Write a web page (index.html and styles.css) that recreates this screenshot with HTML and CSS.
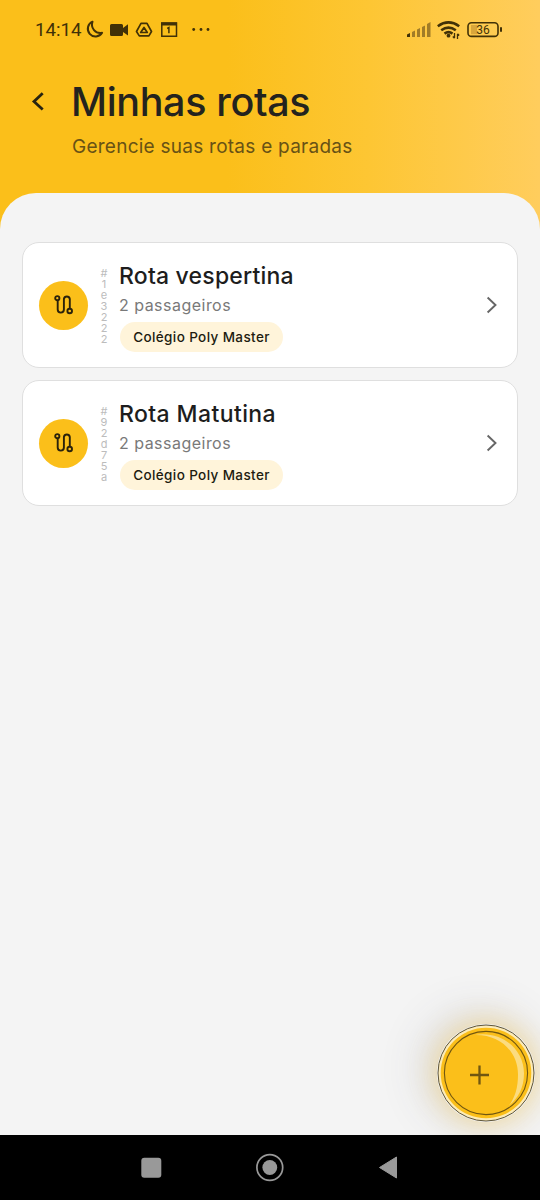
FILE: index.html
```html
<!DOCTYPE html>
<html lang="pt-BR">
<head>
<meta charset="utf-8">
<title>Minhas rotas</title>
<link rel="stylesheet" href="styles.css">
</head>
<body>
<div class="screen">
  <header class="header">
    <div class="status">
      <span class="clock">14:14</span>
      <svg class="status-left" width="130" height="24" viewBox="84 18 130 24" fill="none" stroke="#413107">
        <path d="M92.500 21.700a7.700 7.700 0 1 0 9.600 11.100 8.400 8.400 0 0 1-9.600-11.100z" stroke-width="2" stroke-linejoin="round"/>
        <path d="M111.500 24h10q1.500 0 1.500 1.500v2.400l5-3.700v11.400l-5-3.700v2.600q0 1.500-1.500 1.500h-10q-1.500 0-1.500-1.500v-9q0-1.500 1.500-1.500z" fill="#413107" stroke="none"/>
        <path d="M141 23.300h6l4.500 8.200-2.600 4.400h-9.600l-2.800-4.400zM144 27.500l3.300 5h-6.600z" stroke-width="1.700" stroke-linejoin="round"/>
        <path d="M161.800 23h14.700v13.200h-14.700z" stroke-width="1.500"/>
        <path d="M161 24h16" stroke-width="3"/>
        <path d="M167.200 28.500l1.700-.9v5.700" stroke-width="1.500"/>
        <g fill="#413107" stroke="none"><circle cx="193.700" cy="29.500" r="1.400"/><circle cx="201" cy="29.500" r="1.400"/><circle cx="208" cy="29.500" r="1.400"/></g>
      </svg>
      <svg class="status-right" width="100" height="24" viewBox="404 18 100 24" fill="none" stroke="#413107">
        <g stroke="none" fill="#a17c27"><path d="M412 32l3-1.500V37h-3zM417 29.500l3-1.500v9h-3zM422 27l3-1.500V37h-3zM427 24l3.500-2v15H427z"/><path d="M407 34.500l3-1.500v4h-3z" fill="#413107"/></g>
        <path d="M437.800 26.200q10.700-7.500 21.400 0M441.200 30.200q7.300-5.200 14.600 0M444.500 33.600q4-3 8 0" stroke-width="2.600"/>
        <circle cx="448.500" cy="35.700" r="1.900" fill="#413107" stroke="none"/>
        <path d="M454.500 33v5M457.500 34v5M452.800 36.500l1.700 1.800M459.200 35.500l-1.700-1.800" stroke-width="1.300"/>
        <rect x="468" y="22.800" width="30" height="13.600" rx="3.500" stroke-width="1.600"/>
        <path d="M471 25h6v9.200h-6z" fill="#d9a63b" stroke="none"/>
        <path d="M501 27.200v4.600" stroke-width="2"/>
        <text class="battery" x="483" y="34" text-anchor="middle">36</text>
      </svg>
    </div>
    <div class="heading">
      <svg class="back" width="14" height="20" viewBox="0 0 14 20"><path d="M12.700 2.300 4 10.500l8.700 8" fill="none" stroke="#282410" stroke-width="2.800"/></svg>
      <div>
        <h1 class="title">Minhas rotas</h1>
        <p class="subtitle">Gerencie suas rotas e paradas</p>
      </div>
    </div>
  </header>
  <main class="sheet">
    <article class="card">
      <div class="route-icon">
        <svg width="20" height="20" viewBox="0 0 20 20" fill="none" stroke="#2b220b" stroke-width="1.900"><circle cx="3.300" cy="3.200" r="2.100"/><circle cx="15.700" cy="16" r="2.300"/><path d="M3.700 5.300v9.200a3.100 3.100 0 0 0 6.200 0V4a3 3 0 0 1 5.900 0v9.700"/></svg>
      </div>
      <div class="code"><span>#</span><span>1</span><span>e</span><span>3</span><span>2</span><span>2</span><span>2</span></div>
      <div class="info">
        <h2 class="name">Rota vespertina</h2>
        <p class="count">2 passageiros</p>
        <span class="chip">Colégio Poly Master</span>
      </div>
      <svg class="chevron" width="12" height="18" viewBox="0 0 12 18"><path d="M1.600 1.500 9.500 9l-7.900 7.500" fill="none" stroke="#666" stroke-width="1.900"/></svg>
    </article>
    <article class="card">
      <div class="route-icon">
        <svg width="20" height="20" viewBox="0 0 20 20" fill="none" stroke="#2b220b" stroke-width="1.900"><circle cx="3.300" cy="3.200" r="2.100"/><circle cx="15.700" cy="16" r="2.300"/><path d="M3.700 5.300v9.200a3.100 3.100 0 0 0 6.200 0V4a3 3 0 0 1 5.900 0v9.700"/></svg>
      </div>
      <div class="code"><span>#</span><span>9</span><span>2</span><span>d</span><span>7</span><span>5</span><span>a</span></div>
      <div class="info">
        <h2 class="name name-b">Rota Matutina</h2>
        <p class="count">2 passageiros</p>
        <span class="chip">Colégio Poly Master</span>
      </div>
      <svg class="chevron" width="12" height="18" viewBox="0 0 12 18"><path d="M1.600 1.500 9.500 9l-7.900 7.500" fill="none" stroke="#666" stroke-width="1.900"/></svg>
    </article>
    <button class="fab" aria-label="Adicionar rota">
      <svg width="98" height="98" viewBox="437 1023.500 98 98" fill="none">
        <circle cx="486" cy="1072.500" r="48" fill="#fcebb7" stroke="#5d543a"/>
        <circle cx="486" cy="1072.500" r="45.300" fill="#fbbf1a"/>
        <path d="M475 1034.500C502 1030 524 1049 524 1073c0 14-6 25-15 32 6-8 9-18 9-31 0-22-17-40-43-39.500z" fill="#fbdc80"/>
        <circle cx="486" cy="1072.500" r="41.600" stroke="#705611" stroke-width="1.100"/>
        <path d="M470 1074.500h19M479.500 1065v19" stroke="#705611" stroke-width="2.300"/>
      </svg>
    </button>
  </main>
  <nav class="nav">
    <svg width="300" height="32" viewBox="120 1152 300 32">
      <rect x="141.300" y="1157.700" width="20" height="20" rx="3" fill="#999"/>
      <circle cx="269.800" cy="1167.500" r="12.900" fill="none" stroke="#999" stroke-width="1.700"/>
      <circle cx="269.800" cy="1167.500" r="7.400" fill="#999"/>
      <path d="M379.500 1167.500 396.500 1157v21z" fill="#999" stroke="#999" stroke-linejoin="round"/>
    </svg>
  </nav>
</div>
</body>
</html>
```
FILE: styles.css
```css
* { box-sizing: border-box; margin: 0; }

body { background: #f4f4f4; font-family: "Open Sans", sans-serif; }

.screen {
  width: 540px;
  height: 1200px;
  display: flex;
  flex-direction: column;
  overflow: hidden;
  background: linear-gradient(90deg, #fbbf1a 0%, #fbbf1a 42%, #fdc633 68%, #ffcd5d 100%);
}

.header { height: 193px; flex: none; }

.status {
  display: flex;
  align-items: center;
  height: 60px;
  padding: 0 36px 0 35px;
}
.clock { width: 49px; font: 400 18.700px/24px Roboto, sans-serif; color: #413107; }
.status-right { margin-left: auto; }
.battery { font: 400 12px Roboto, sans-serif; fill: #413107; stroke: none; }

.heading { display: flex; padding: 18px 0 0 30px; gap: 28px; }
.back { margin-top: 12.500px; }
.title { margin-left: -1px; font: 500 39.500px/48px Inter, sans-serif; letter-spacing: -0.350px; color: #24231e; white-space: nowrap; }
.subtitle { margin-top: 7px; font: 400 19px/28px Inter, sans-serif; letter-spacing: 0.250px; color: #685215; white-space: nowrap; }

.sheet {
  position: relative;
  flex: 1;
  display: flex;
  flex-direction: column;
  gap: 12px;
  padding: 49px 22px 0;
  border-radius: 36px 36px 0 0;
  background: #f4f4f4;
}
.card {
  display: flex;
  align-items: center;
  height: 126px;
  flex: none;
  padding: 0 19px 0 16px;
  border: 1px solid #dfdfdf;
  border-radius: 17px;
  background: #fff;
}
.route-icon {
  display: flex;
  align-items: center;
  justify-content: center;
  width: 49px;
  height: 49px;
  border-radius: 50%;
  background: #fbbf1a;
}
.code {
  display: flex;
  flex-direction: column;
  align-items: center;
  width: 10px;
  margin-left: 11px;
  padding-top: 2px;
  font: 400 11px/11px Inter, sans-serif;
  color: #bcbcbc;
}
.info { margin-left: 10px; padding-top: 2px; }
.name { font: 500 23px/32px Inter, sans-serif; color: #1d1d1d; letter-spacing: 0.200px; white-space: nowrap; }
.name-b { letter-spacing: 0.400px; }
.count { font: 400 16px/26px Inter, sans-serif; letter-spacing: 0.480px; color: #797979; }
.chip {
  display: flex;
  align-items: center;
  justify-content: center;
  width: 163px;
  height: 30px;
  margin: 4px 0 0 1px;
  border-radius: 15px;
  background: #fff4da;
  font: 500 13.500px/20px Inter, sans-serif;
  letter-spacing: 0.380px;
  color: #211b10;
  white-space: nowrap;
}
.chevron { margin-left: auto; }

.fab {
  position: absolute;
  right: 5px;
  bottom: 13.500px;
  width: 98px;
  height: 98px;
  padding: 0;
  border: 0;
  border-radius: 50%;
  background: none;
  box-shadow: 0 0 28px 2px rgba(255, 205, 70, 0.45), -8px -5px 48px 4px rgba(70, 70, 90, 0.16);
}
.fab svg { display: block; }

.nav {
  position: relative;
  display: flex;
  align-items: center;
  justify-content: center;
  height: 65px;
  flex: none;
  background: #000;
}
```
